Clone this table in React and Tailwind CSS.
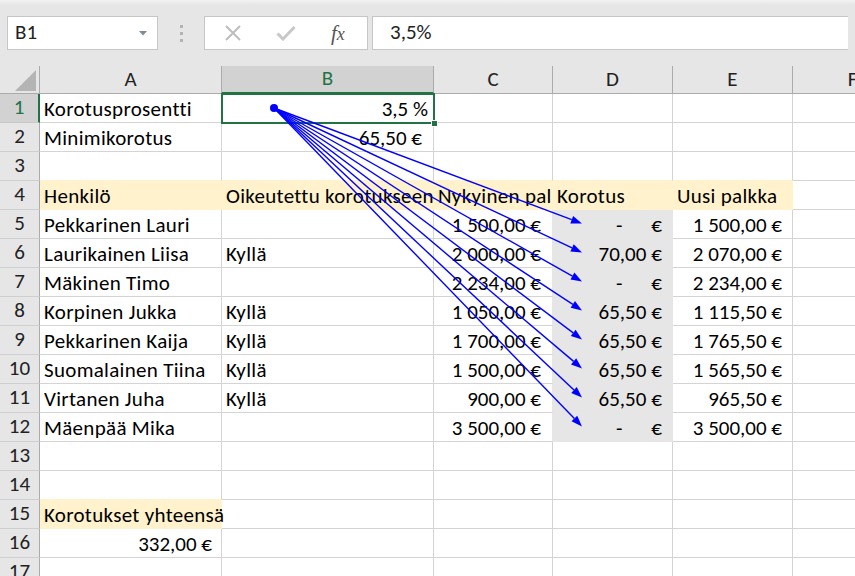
import React from 'react'

const COLS = 'grid grid-cols-[40px_182px_212px_119px_120px_120px_120px]'
const FONT = "font-['Carlito','Lato',sans-serif]"

const FILL_BG = { y: 'bg-[#fff2cc]', g: 'bg-[#e7e6e6]' }
const FILL_R = { y: 'border-r-[#fff2cc]', g: 'border-r-[#e7e6e6]', n: 'border-r-[#d4d4d4]' }
const FILL_B = { y: 'border-b-[#fff2cc]', g: 'border-b-[#e7e6e6]', n: 'border-b-[#d4d4d4]' }

const people = [
  ['Pekkarinen Lauri', '', '1 500,00', null, '1 500,00'],
  ['Laurikainen Liisa', 'Kyllä', '2 000,00', '70,00', '2 070,00'],
  ['Mäkinen Timo', '', '2 234,00', null, '2 234,00'],
  ['Korpinen Jukka', 'Kyllä', '1 050,00', '65,50', '1 115,50'],
  ['Pekkarinen Kaija', 'Kyllä', '1 700,00', '65,50', '1 765,50'],
  ['Suomalainen Tiina', 'Kyllä', '1 500,00', '65,50', '1 565,50'],
  ['Virtanen Juha', 'Kyllä', '900,00', '65,50', '965,50'],
  ['Mäenpää Mika', '', '3 500,00', null, '3 500,00'],
]

const euro = (v, pr) => ({ t: `${v} €`, right: true, pr })
const acc = (v) => ({
  right: true,
  pr: 'pr-[10px]',
  fill: 'g',
  t: v ? (
    <>
      <span>{v}</span>
      <span className="ml-[5px]">€</span>
    </>
  ) : (
    <>
      <span className="mr-[24px]">-</span>
      <span className="ml-[5px]">€</span>
    </>
  ),
})

const empty = () => [{}, {}, {}, {}, {}, {}]

const rows = [
  [{ t: 'Korotusprosentti' }, { t: '3,5 %', right: true, pr: 'pr-[5px]' }, {}, {}, {}, {}],
  [{ t: 'Minimikorotus' }, euro('65,50', 'pr-[11px]'), {}, {}, {}, {}],
  empty(),
  [
    { t: 'Henkilö', fill: 'y' },
    { t: 'Oikeutettu korotukseen', fill: 'y' },
    { t: 'Nykyinen palkka', fill: 'y' },
    { t: 'Korotus', fill: 'y' },
    { t: 'Uusi palkka', fill: 'y' },
    {},
  ],
  ...people.map((p) => [
    { t: p[0] },
    { t: p[1] },
    euro(p[2], 'pr-[11px]'),
    acc(p[3]),
    euro(p[4], 'pr-[10px]'),
    {},
  ]),
  empty(),
  empty(),
  [{ t: 'Korotukset yhteensä', fill: 'y' }, {}, {}, {}, {}, {}],
  [euro('332,00', 'pr-[9px]'), {}, {}, {}, {}, {}],
  empty(),
]

function Cell({ cell, right, below }) {
  const own = cell.fill
  const r = own || right?.fill || 'n'
  const b = own || below?.fill || 'n'
  // text spills into an empty neighbour, like Excel does
  const clip = right?.t ? 'overflow-hidden' : 'overflow-visible'
  return (
    <div
      className={[
        'h-[29px] border-r border-b flex items-end pb-[2px] whitespace-nowrap text-[21px] leading-[21px] text-black',
        clip,
        FILL_R[r],
        FILL_B[b],
        own ? FILL_BG[own] : 'bg-white',
        cell.right ? 'justify-end ' + (cell.pr || '') : 'justify-start pl-[4px] tracking-[0.3px]',
      ].join(' ')}
    >
      {cell.t && <span className="relative z-[1] flex">{cell.t}</span>}
    </div>
  )
}

function FormulaBar() {
  return (
    <div className="h-[66px] bg-gradient-to-b from-[#f2f2f2] to-[#e6e6e6] to-[8%] relative flex items-start pt-[16px] px-[7px] gap-0">
      <div className="w-[151px] h-[34px] bg-white border border-[#c6c6c6] flex items-center justify-between pl-[7px] pr-[10px]">
        <span className="text-[21px] text-[#222]">B1</span>
        <svg width="8" height="5" viewBox="0 0 8 5">
          <path d="M0 0 H8 L4 4.5 Z" fill="#7f8c99" />
        </svg>
      </div>
      <div className="w-[46px] h-[34px] flex flex-col items-center justify-center gap-[4px]">
        <div className="w-[3px] h-[3px] bg-[#b3b3b3]" />
        <div className="w-[3px] h-[3px] bg-[#b3b3b3]" />
        <div className="w-[3px] h-[3px] bg-[#b3b3b3]" />
      </div>
      <div className="w-[164px] h-[34px] bg-white border border-[#c6c6c6] flex items-center">
        <svg className="ml-[19px]" width="18" height="16" viewBox="0 0 18 16">
          <path d="M2 1 L16 15 M16 1 L2 15" stroke="#bdbdbd" strokeWidth="2" fill="none" />
        </svg>
        <svg className="ml-[34px]" width="20" height="16" viewBox="0 0 20 16">
          <path d="M1.5 8.5 L7 14 L18.5 2" stroke="#c8c8c8" strokeWidth="3" fill="none" />
        </svg>
        <span className="ml-[35px] font-['Liberation_Serif',serif] italic text-[21px] text-[#555] leading-none">
          f<span className="text-[18px]">x</span>
        </span>
      </div>
      <div className="ml-[4px] flex-1 h-[34px] bg-white border border-[#c6c6c6] border-r-0 flex items-center pl-[17px]">
        <span className="text-[21px] text-[#222]">3,5%</span>
      </div>
    </div>
  )
}

function HeaderRow() {
  const letters = ['A', 'B', 'C', 'D', 'E', 'F']
  return (
    <div className={COLS}>
      <div className="h-[28px] bg-[#e6e6e6] border-r border-b border-[#ababab] relative overflow-hidden">
        <svg className="absolute left-[15px] top-[4px]" width="21" height="21" viewBox="0 0 21 21">
          <path d="M21 0 V21 H0 Z" fill="#b4b4b4" />
        </svg>
      </div>
      {letters.map((l) =>
        l === 'B' ? (
          <div
            key={l}
            className="h-[28px] bg-[#d2d2d2] border-r border-[#ababab] border-b-2 border-b-[#217346] flex items-center justify-center text-[21px] text-[#217346]"
          >
            {l}
          </div>
        ) : (
          <div
            key={l}
            className="h-[28px] bg-[#e6e6e6] border-r border-b border-[#ababab] flex items-center justify-center text-[21px] text-[#222]"
          >
            {l}
          </div>
        )
      )}
    </div>
  )
}

function Arrows() {
  const sx = 274
  const sy = 108
  const tips = Array.from({ length: 8 }, (_, i) => [582, 223.5 + i * 29])
  return (
    <svg className="absolute left-0 top-0 z-[2] pointer-events-none" width="855" height="576">
      <circle cx={sx} cy={sy} r="4" fill="#0000ff" />
      {tips.map(([tx, ty], i) => {
        const dx = tx - sx
        const dy = ty - sy
        const len = Math.hypot(dx, dy)
        const ux = dx / len
        const uy = dy / len
        const bx = tx - ux * 11
        const by = ty - uy * 11
        const nx = -uy * 4
        const ny = ux * 4
        return (
          <g key={i}>
            <line x1={sx} y1={sy} x2={bx} y2={by} stroke="#0000ff" strokeWidth="1.4" />
            <polygon points={`${tx},${ty} ${bx + nx},${by + ny} ${bx - nx},${by - ny}`} fill="#0000ff" />
          </g>
        )
      })}
    </svg>
  )
}

export default function App() {
  return (
    <div className={`w-[855px] h-[576px] overflow-hidden relative bg-white ${FONT}`}>
      <FormulaBar />
      <HeaderRow />
      <div>
        {rows.map((row, ri) => (
          <div key={ri} className={COLS}>
            <div
              className={
                ri === 0
                  ? 'h-[29px] bg-[#d2d2d2] border-b border-b-[#c8c8c8] border-r-2 border-r-[#217346] flex items-center justify-center text-[21px] text-[#217346]'
                  : 'h-[29px] bg-[#e6e6e6] border-b border-b-[#cfcfcf] border-r border-r-[#ababab] flex items-center justify-center text-[21px] text-[#222]'
              }
            >
              {ri + 1}
            </div>
            {row.map((cell, ci) => (
              <Cell key={ci} cell={cell} right={row[ci + 1]} below={rows[ri + 1]?.[ci]} />
            ))}
          </div>
        ))}
      </div>
      <div className="absolute left-[221px] top-[93px] z-[2] w-[214px] h-[31px] border-2 border-[#217346] pointer-events-none">
        <div className="absolute right-[-5px] bottom-[-5px] w-[7px] h-[7px] bg-[#217346] border border-white" />
      </div>
      <Arrows />
    </div>
  )
}
